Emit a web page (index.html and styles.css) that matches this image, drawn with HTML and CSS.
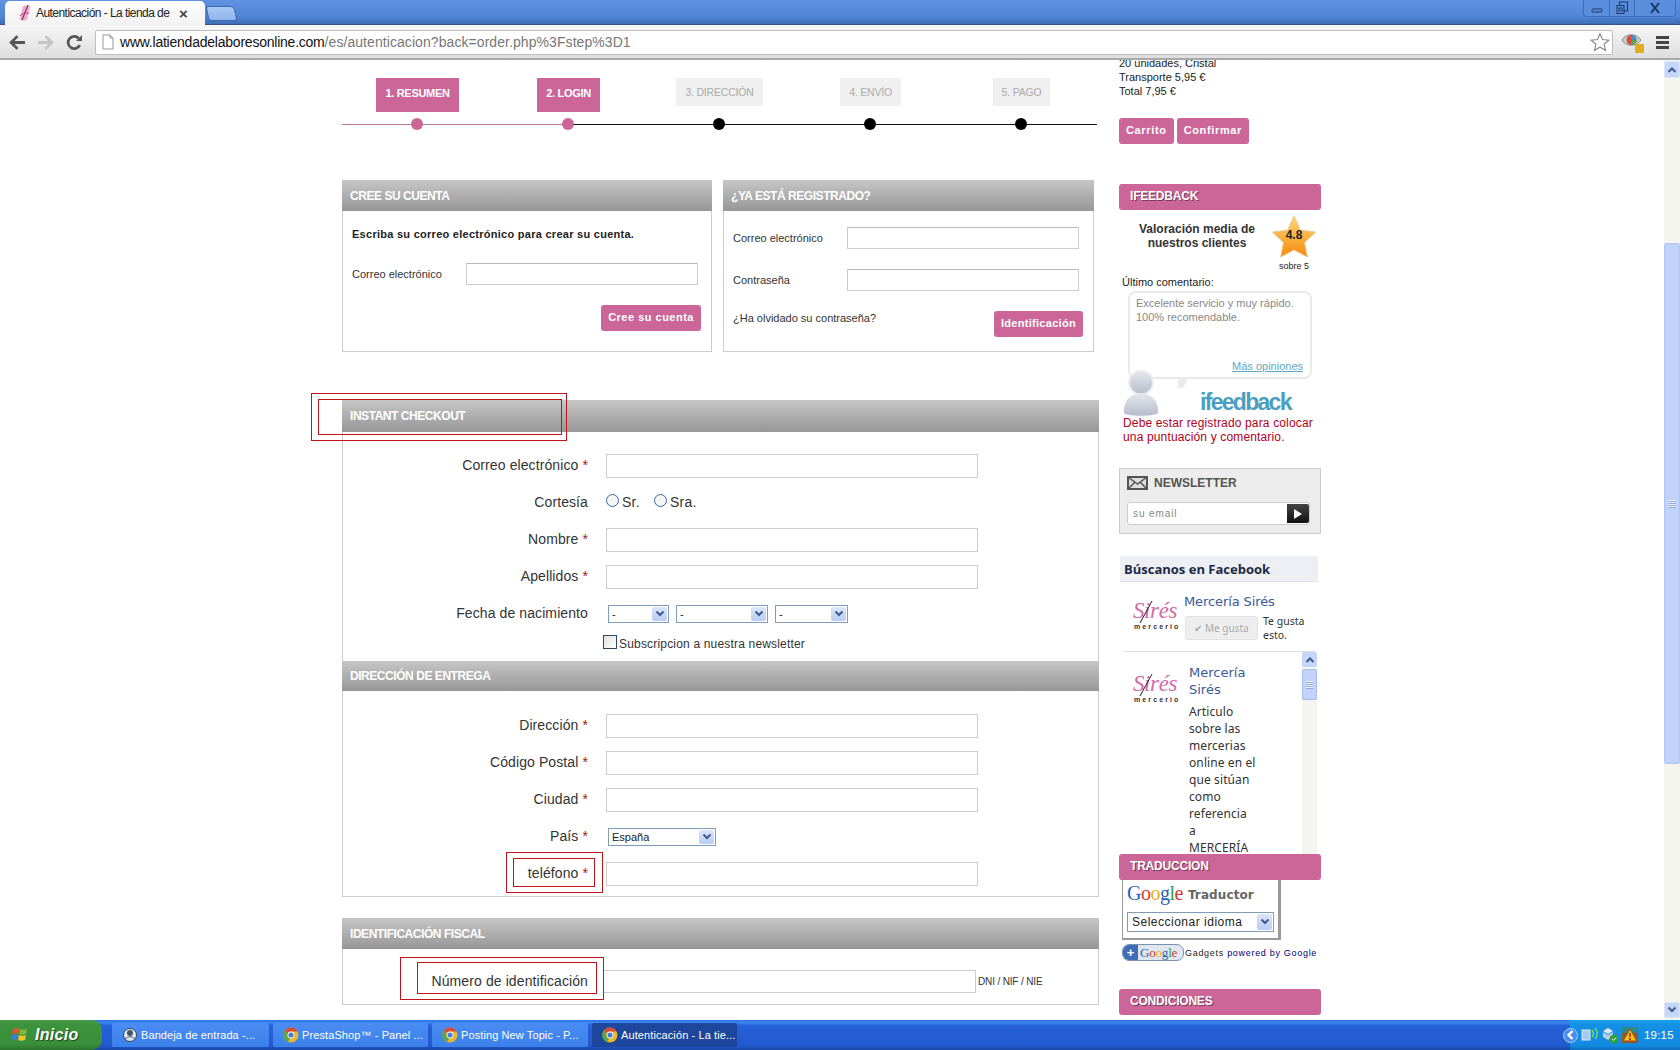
FILE: index.html
```html
<!DOCTYPE html>
<html lang="es">
<head>
<meta charset="utf-8">
<title>Autenticación - La tienda de labores online</title>
<link rel="stylesheet" href="styles.css">
</head>
<body>
<svg class="defs" width="0" height="0">
  <defs>
    <symbol id="chrome" viewBox="0 0 16 16">
      <circle cx="8" cy="8" r="7.5" fill="#e8b92c"/>
      <path d="M8 .5A7.5 7.5 0 0 1 14.6 4.5H8A3.6 3.6 0 0 0 4.6 7L2 3A7.5 7.5 0 0 1 8 .5Z" fill="#d94a3a"/>
      <path d="M2 3 4.6 7A3.6 3.6 0 0 0 7 11.5L5 15A7.5 7.5 0 0 1 2 3Z" fill="#5aa64a"/>
      <circle cx="8" cy="8" r="3.4" fill="#fff"/>
      <circle cx="8" cy="8" r="2.6" fill="#4a7fd0"/>
    </symbol>
    <symbol id="chev" viewBox="0 0 10 8">
      <path d="M1.5 1.5 5 5 8.500 1.500" fill="none" stroke="#3f5a8e" stroke-width="2"/>
    </symbol>
    <symbol id="sireslogo" viewBox="0 0 44 30">
      <path d="M7 22 19 0" stroke="#222" stroke-width="1"/>
    </symbol>
  </defs>
</svg>

<header class="chrome">
  <div class="tabstrip">
    <div class="tab">
      <svg class="favicon" viewBox="0 0 14 16"><path d="M5 1c3-1 7-1 7 1L9 14c-1 2-7 2-7 0Z" fill="#f5a5cf"/><path d="M10 0 4 15" stroke="#333" stroke-width="1"/><path d="M2 11c2-3 8-4 9-2" fill="none" stroke="#c2357f"/></svg>
      <span class="tab-title">Autenticación - La tienda de</span>
      <span class="tab-close">×</span>
    </div>
    <div class="newtab"></div>
    <div class="winbtns">
      <div class="winbtn"><svg width="12" height="12" viewBox="0 0 12 12"><rect x="1" y="7" width="10" height="3" rx="1" fill="none" stroke="#1a3565" stroke-width="1"/></svg></div>
      <div class="winbtn"><svg width="13" height="14" viewBox="0 0 13 14"><rect x="3.500" y="1" width="8" height="9" fill="none" stroke="#1a3565"/><rect x="1" y="4.500" width="7" height="8" fill="#5d8fdc" stroke="#1a3565"/><rect x="3" y="7" width="3" height="3" fill="none" stroke="#1a3565"/></svg></div>
      <div class="winbtn winclose"><svg width="12" height="12" viewBox="0 0 12 12"><path d="M2 1 10 11M10 1 2 11" stroke="#1a3565" stroke-width="2"/></svg></div>
    </div>
  </div>
  <div class="toolbar">
    <svg class="navicon" viewBox="0 0 16 16"><path d="M8 2 2 8l6 6M2 8h13" fill="none" stroke="#555" stroke-width="2.600"/></svg>
    <svg class="navicon" viewBox="0 0 16 16"><path d="M8 2l6 6-6 6M14 8H1" fill="none" stroke="#c4c4c4" stroke-width="2.600"/></svg>
    <svg class="navicon reload" viewBox="0 0 16 16"><path d="M13 10.500A5.800 5.800 0 1 1 12 4" fill="none" stroke="#555" stroke-width="2.600"/><path d="M9.500 6.500H15V1Z" fill="#555"/></svg>
    <div class="omnibox">
      <svg class="pageicon" viewBox="0 0 12 16"><path d="M1 1h7l3 3v11H1Z" fill="#fff" stroke="#999"/><path d="M8 1v3h3" fill="none" stroke="#999"/></svg>
      <span class="url"><span class="url-host">www.latiendadelaboresonline.com</span>/es/autenticacion?back=order.php%3Fstep%3D1</span>
      <svg class="staricon" viewBox="0 0 18 18"><path d="M9 1.500 11.300 6.700 17 7.300 12.700 11 14 16.500 9 13.700 4 16.500 5.300 11 1 7.300 6.700 6.700Z" fill="#fff" stroke="#888"/></svg>
    </div>
    <div class="extension">
      <svg width="24" height="24" viewBox="0 0 24 24"><path d="M1 10C5 3 15 3 20 10 15 17 5 17 1 10Z" fill="#c8d0c0" stroke="#889"/><circle cx="10.500" cy="10" r="5" fill="#d94a3a"/><path d="M10.500 5a5 5 0 0 1 0 10Z" fill="#3f8fd0"/><path d="M10.500 10h5a5 5 0 0 1-5 5Z" fill="#5aa64a"/><rect x="14" y="14" width="9" height="9" rx="1" fill="#e0ac20"/></svg>
    </div>
    <div class="hamburger"><i></i><i></i><i></i></div>
  </div>
</header>

<div class="viewport">
  <main class="page">
    <div class="maincol">
      <ol class="steps">
        <li class="step on"><span class="step-label">1. RESUMEN</span><span class="step-dot"></span></li>
        <li class="step on"><span class="step-label">2. LOGIN</span><span class="step-dot"></span></li>
        <li class="step"><span class="step-label">3. DIRECCIÓN</span><span class="step-dot"></span></li>
        <li class="step"><span class="step-label">4. ENVÍO</span><span class="step-dot"></span></li>
        <li class="step"><span class="step-label">5. PAGO</span><span class="step-dot"></span></li>
      </ol>

      <div class="logins">
        <section class="loginbox">
          <h3 class="graybar small">CREE SU CUENTA</h3>
          <p class="intro">Escriba su correo electrónico para crear su cuenta.</p>
          <div class="lrow first"><label class="llabel">Correo electrónico</label><input class="linput" type="text"></div>
          <div class="lfoot end"><a class="pinkbtn">Cree su cuenta</a></div>
        </section>
        <section class="loginbox second">
          <h3 class="graybar small">¿YA ESTÁ REGISTRADO?</h3>
          <div class="lrow top"><label class="llabel">Correo electrónico</label><input class="linput" type="text"></div>
          <div class="lrow"><label class="llabel">Contraseña</label><input class="linput" type="text"></div>
          <div class="lfoot between"><span class="forgot">¿Ha olvidado su contraseña?</span><a class="pinkbtn">Identificación</a></div>
        </section>
      </div>

      <section class="checkout">
        <div class="mark mark-a"></div>
        <div class="mark mark-b"></div>
        <h3 class="graybar">INSTANT CHECKOUT</h3>
        <div class="formbody">
          <div class="row"><label class="rlabel">Correo electrónico <b>*</b></label><input class="rinput" type="text"></div>
          <div class="row"><label class="rlabel">Cortesía</label>
            <span class="radios"><span class="radio"></span><span class="rtext">Sr.</span><span class="radio r2"></span><span class="rtext">Sra.</span></span></div>
          <div class="row"><label class="rlabel">Nombre <b>*</b></label><input class="rinput" type="text"></div>
          <div class="row"><label class="rlabel">Apellidos <b>*</b></label><input class="rinput" type="text"></div>
          <div class="row"><label class="rlabel">Fecha de nacimiento</label>
            <span class="selects">
              <span class="sel w61">-<span class="arrow"><svg width="10" height="8"><use href="#chev"/></svg></span></span>
              <span class="sel w92">-<span class="arrow"><svg width="10" height="8"><use href="#chev"/></svg></span></span>
              <span class="sel w73">-<span class="arrow"><svg width="10" height="8"><use href="#chev"/></svg></span></span>
            </span></div>
          <div class="row news"><span class="checkbox"></span><span class="newstext">Subscripcion a nuestra newsletter</span></div>
        </div>
        <h3 class="graybar thin">DIRECCIÓN DE ENTREGA</h3>
        <div class="formbody addr">
          <div class="row"><label class="rlabel">Dirección <b>*</b></label><input class="rinput" type="text"></div>
          <div class="row"><label class="rlabel">Código Postal <b>*</b></label><input class="rinput" type="text"></div>
          <div class="row"><label class="rlabel">Ciudad <b>*</b></label><input class="rinput" type="text"></div>
          <div class="row"><label class="rlabel">País <b>*</b></label>
            <span class="selects"><span class="sel w108">España<span class="arrow"><svg width="10" height="8"><use href="#chev"/></svg></span></span></span></div>
          <div class="row"><label class="rlabel">teléfono <b>*</b></label><input class="rinput" type="text"></div>
          <div class="mark mark-c"></div>
          <div class="mark mark-d"></div>
        </div>
      </section>

      <section class="checkout fiscal">
        <h3 class="graybar">IDENTIFICACIÓN FISCAL</h3>
        <div class="fiscalbody">
          <label class="rlabel">Número de identificación</label><input class="rinput tight" type="text"><span class="dni">DNI / NIF / NIE</span>
          <div class="mark mark-e"></div>
          <div class="mark mark-f"></div>
        </div>
      </section>
    </div>

    <aside class="side">
      <div class="cart">20 unidades, Cristal<br>Transporte 5,95 €<br>Total 7,95 €</div>
      <div class="cartbtns"><a class="pinkbtn">Carrito</a><a class="pinkbtn c2">Confirmar</a></div>

      <h3 class="sidehead">IFEEDBACK</h3>
      <div class="rating">
        <div class="rating-text">Valoración media de<br>nuestros clientes</div>
        <div class="rating-star">
          <svg class="star" viewBox="0 0 46 44"><defs><linearGradient id="sg" x1="0" y1="0" x2="0" y2="1"><stop offset="0" stop-color="#ffd979"/><stop offset="1" stop-color="#f58a0c"/></linearGradient></defs><path d="M23 1 29.500 15.500 45 17.500 33.800 28.300 36.700 43 23 35.800 9.300 43 12.200 28.300 1 17.500 16.500 15.500Z" fill="url(#sg)" stroke="#e8c98a"/></svg>
          <span class="star-val">4.8</span>
          <span class="star-sub">sobre 5</span>
        </div>
      </div>
      <div class="lastc">Último comentario:</div>
      <div class="bubble">
        <p class="bubble-text">Excelente servicio y muy rápido.<br>100% recomendable.</p>
        <a class="more">Más opiniones</a>
        <span class="tail"></span>
        <svg class="person" viewBox="0 0 36 46"><defs><linearGradient id="pg" x1="0" y1="0" x2="0" y2="1"><stop offset="0" stop-color="#e6e8ee"/><stop offset="1" stop-color="#b6bccb"/></linearGradient></defs><circle cx="18" cy="13" r="12" fill="url(#pg)" stroke="#eee" stroke-width="2"/><path d="M1 44C0 30 8 24 18 24S36 30 35 44C28 47 8 47 1 44Z" fill="url(#pg)"/></svg>
        <span class="iflogo">ifeedback</span>
      </div>
      <p class="warn">Debe estar registrado para colocar una puntuación y comentario.</p>

      <div class="newsletter">
        <div class="nl-head"><svg width="21" height="14" viewBox="0 0 21 14"><rect x="1" y="1" width="19" height="12" fill="#ddd" stroke="#555" stroke-width="2"/><path d="M1 1 10.500 8 20 1M1 13 8 6M20 13 13 6" fill="none" stroke="#555" stroke-width="1.500"/></svg><span>NEWSLETTER</span></div>
        <div class="nl-field"><span class="nl-ph">su email</span><span class="nl-go"><svg width="10" height="10" viewBox="0 0 10 10"><path d="M1 0 9 5 1 10Z" fill="#fff"/></svg></span></div>
      </div>

      <div class="fb">
        <div class="fb-head">Búscanos en Facebook</div>
        <div class="fb-top">
          <div class="sires"><span class="sires-name">Sirés</span><svg class="needle"><use href="#sireslogo"/></svg><span class="sires-sub">mercerio</span></div>
          <div class="fb-info">
            <a class="fb-name">Mercería Sirés</a>
            <div class="fb-like"><span class="likebtn">✔ Me gusta</span><span class="liketxt">Te gusta esto.</span></div>
          </div>
        </div>
        <div class="fb-feed">
          <div class="sires s2"><span class="sires-name">Sirés</span><svg class="needle"><use href="#sireslogo"/></svg><span class="sires-sub">mercerio</span></div>
          <div class="fb-post"><a class="fb-name">Mercería Sirés</a><p>Articulo sobre las mercerias online en el que sitúan como referencia<br>a<br>MERCERÍA</p></div>
          <div class="fb-scroll">
            <span class="fbs-up"><svg width="10" height="8" viewBox="0 0 10 8"><path d="M1.500 6 5 2.500 8.500 6" fill="none" stroke="#3f5a8e" stroke-width="2"/></svg></span>
            <span class="fbs-thumb"><span class="grip"></span></span>
          </div>
        </div>
      </div>

      <h3 class="sidehead trad">TRADUCCION</h3>
      <div class="gt">
        <div class="gt-logo"><span class="gb">G</span><span class="gr">o</span><span class="gy">o</span><span class="gb">g</span><span class="gg">l</span><span class="gr">e</span><span class="gt-word">Traductor</span></div>
        <div class="sel gt-sel">Seleccionar idioma<span class="arrow"><svg width="10" height="8"><use href="#chev"/></svg></span></div>
      </div>
      <div class="gadgets">
        <span class="plusg"><span class="plus">+</span><span class="plusw"><span class="gb">G</span><span class="gr">o</span><span class="gy">o</span><span class="gb">g</span><span class="gg">l</span><span class="gr">e</span></span></span>
        <span class="gtext">Gadgets <span class="pow">powered by Google</span></span>
      </div>

      <h3 class="sidehead cond">CONDICIONES</h3>
    </aside>
  </main>

  <div class="vscroll">
    <span class="vs-btn"><svg width="10" height="8" viewBox="0 0 10 8"><path d="M1.500 6 5 2.500 8.500 6" fill="none" stroke="#3f5a8e" stroke-width="2"/></svg></span>
    <span class="vs-thumb"><span class="grip"></span></span>
    <span class="vs-btn bottom"><svg width="10" height="8"><use href="#chev"/></svg></span>
  </div>
</div>

<footer class="taskbar">
  <div class="start">
    <svg width="20" height="20" viewBox="0 0 20 20"><path d="M3 4c2-1 4-1 6 0L8 9C6 8 4 8 2 9Z" fill="#e8552c"/><path d="M10 4c2 1 4 1 7 0l-1 5c-2 1-5 1-7 0Z" fill="#7fb93a"/><path d="M2 10c2-1 4-1 6 0l-1 5c-2-1-4-1-6 0Z" fill="#3f7fd8"/><path d="M9 10c2 1 5 1 7 0l-1 5c-2 1-5 1-7 0Z" fill="#f0c22c"/></svg>
    <span class="start-text">Inicio</span>
  </div>
  <div class="tasks">
    <div class="task t1"><svg class="tk-ic" viewBox="0 0 16 16"><circle cx="8" cy="8" r="6.500" fill="#dfe6ee" stroke="#345"/><circle cx="8" cy="6" r="3" fill="#456"/><path d="M3 12c3-3 7-3 10 0" stroke="#456" fill="none"/></svg><span>Bandeja de entrada -...</span></div>
    <div class="task t2"><svg class="tk-ic"><use href="#chrome"/></svg><span>PrestaShop™ - Panel ...</span></div>
    <div class="task t3"><svg class="tk-ic"><use href="#chrome"/></svg><span>Posting New Topic - P...</span></div>
    <div class="task t4 active"><svg class="tk-ic"><use href="#chrome"/></svg><span>Autenticación - La tie...</span></div>
  </div>
  <div class="tray">
    <span class="tray-toggle"><svg width="10" height="10" viewBox="0 0 10 10"><path d="M6.500 1 2.500 5 6.500 9" fill="none" stroke="#fff" stroke-width="2.400"/></svg></span>
    <svg width="18" height="16" viewBox="0 0 18 16"><rect x="1" y="3" width="8" height="10" fill="#a8c8f0" stroke="#dfe9f8"/><path d="M11 3c2 2 2 5 0 7M14 1c3 3 3 8 0 11" fill="none" stroke="#6fe05a" stroke-width="1.500"/></svg>
    <svg class="tray-ic" width="18" height="18" viewBox="0 0 18 18"><path d="M2 5 7 2 12 5 7 8Z" fill="#dfe9f8"/><path d="M2 6 7 9V14L2 11ZM12 6V11L7 14V9Z" fill="#b8cde8"/><circle cx="13" cy="13" r="4.500" fill="#2f9e3f"/><path d="M11 13l1.500 1.500L15 11.500" stroke="#fff" fill="none"/></svg>
    <svg class="tray-ic" width="18" height="18" viewBox="0 0 18 18"><rect x="1" y="1" width="16" height="16" fill="#8a5a2a"/><rect x="1" y="1" width="16" height="6" fill="#2a8a8a"/><path d="M9 3 16 15H2Z" fill="#f2c21c" stroke="#b2401c"/><path d="M9 7v4M9 12v2" stroke="#a0201c" stroke-width="1.500"/></svg>
    <span class="clock">19:15</span>
  </div>
</footer>
</body>
</html>
```

FILE: styles.css
```css
* { box-sizing: border-box; }
html, body { margin: 0; padding: 0; height: 100%; }
body {
  width: 1680px; height: 1050px; overflow: hidden;
  display: flex; flex-direction: column;
  font-family: "Liberation Sans", Arial, sans-serif;
  font-size: 11px; color: #333; background: #fff;
}
.defs { position: absolute; }
h3, p, ol { margin: 0; padding: 0; }

/* Browser chrome */
.chrome { flex: none; height: 60px; display: flex; flex-direction: column; }
.tabstrip {
  height: 25px; display: flex; align-items: flex-end; padding-left: 5px; position: relative;
  background: linear-gradient(#5f92e0, #5084d6 70%, #3f6db8);
  border-bottom: 1px solid #35558c;
}
.tab {
  width: 200px; height: 24px; background: linear-gradient(#fff, #f2f2f2); border-radius: 5px 5px 0 0;
  display: flex; align-items: center; padding-left: 13px; margin-bottom: -1px;
}
.favicon { width: 14px; height: 16px; flex: none; }
.tab-title { margin-left: 4px; font-size: 12px; color: #222; white-space: nowrap; width: 134px; letter-spacing: -.55px; }
.tab-close { margin-left: 9px; font-size: 15px; line-height: 1; color: #444; font-weight: bold; }
.newtab {
  width: 29px; height: 15px; margin: 0 0 3px 2px; border-radius: 3px 5px 3px 3px;
  background: linear-gradient(#a9c8f5, #8fb6ee); border: 1px solid #3e69ad; transform: skewX(12deg);
}
.winbtns {
  position: absolute; right: 4px; top: 0; height: 17px; display: flex;
  border: 1px solid #3f6db8; border-top: 0; border-radius: 0 0 4px 4px; background: #5a8edd;
}
.winbtn { width: 25px; display: flex; align-items: center; justify-content: center; border-left: 1px solid #3f6db8; }
.winbtn:first-child { border-left: 0; }
.winclose { width: 41px; }
.toolbar {
  height: 35px; flex: none; display: flex; align-items: center; padding: 1px 0 0 9px; gap: 0;
  background: linear-gradient(#f6f6f6, #dedede); border-bottom: 2px solid #a9a9a9;
}
.navicon { width: 17px; height: 17px; margin-right: 11px; flex: none; }
.navicon.reload { margin-left: 1px; margin-right: 12px; }
.omnibox {
  width: 1518px; height: 25px; background: #fff; border: 1px solid #bdbdbd; border-radius: 2px;
  display: flex; align-items: center; padding-left: 6px; position: relative;
}
.pageicon { width: 12px; height: 16px; flex: none; }
.url { margin-left: 6px; font-size: 14px; color: #777; letter-spacing: .07px; white-space: nowrap; flex: 1; }
.url-host { color: #111; letter-spacing: -.23px; }
.staricon { width: 20px; height: 20px; margin-right: 2px; flex: none; }
.extension { width: 24px; height: 24px; margin-left: 8px; flex: none; }
.hamburger { margin-left: 11px; width: 13px; display: flex; flex-direction: column; gap: 2px; }
.hamburger i { display: block; height: 3px; background: #444; }

/* Viewport */
.viewport { flex: none; height: 960px; display: flex; overflow: hidden; }
.page { width: 1664px; height: 960px; overflow: hidden; display: flex; padding-left: 342px; gap: 20px; }
.maincol { width: 757px; flex: none; }
.side { width: 202px; flex: none; margin-top: -4px; }

/* Steps */
.steps { list-style: none; display: grid; grid-template-columns: repeat(5, 151px); height: 120px; position: relative; padding-top: 18px; }
.steps::before { content: ""; position: absolute; left: 151px; right: 2px; top: 63.5px; height: 1px; background: #111; }
.steps::after { content: ""; position: absolute; left: 0; width: 226px; top: 63.5px; height: 1px; background: #c07a9b; }
.step { display: flex; flex-direction: column; align-items: center; position: relative; }
.step-label {
  height: 28px; padding: 0 9px; line-height: 29px; font-size: 10.5px; font-weight: normal;
  background: #f0f0f0; color: #aaa; letter-spacing: -.2px; white-space: nowrap;
}
.step.on .step-label { background: #cc6699; color: #fff; font-weight: bold; font-size: 11px; height: 34px; line-height: 31px; letter-spacing: -.3px; }
.step-dot {
  position: absolute; top: 40px; width: 12px; height: 12px; border-radius: 50%; background: #000; z-index: 1; transform: translateX(-1px);
}
.step.on .step-dot { background: #cc6699; }

/* Gray bars */
.graybar {
  height: 32px; line-height: 32px; padding-left: 8px; color: #fff; font-size: 12px; font-weight: bold;
  letter-spacing: -.45px; background: linear-gradient(#c6c6c6, #979797);
}
.graybar.thin { height: 30px; line-height: 30px; }

/* Login boxes */
.logins { display: flex; gap: 11px; height: 172px; width: 752px; }
.loginbox { width: 370px; flex: none; border: 1px solid #ccc; border-top: 0; }
.loginbox.second { width: 371px; }
.loginbox .graybar { margin: 0 -1px; height: 31px; }
.intro { font-weight: bold; color: #222; margin: 16px 0 0 9px; line-height: 14px; letter-spacing: .27px; }
.lrow { display: flex; align-items: center; margin: 0 12px 0 9px; }
.lrow.first { margin-top: 22px; }
.lrow.top { margin-top: 16px; }
.lrow + .lrow { margin-top: 20px; }
.llabel { width: 114px; flex: none; }
.linput { width: 232px; height: 22px; border: 1px solid #ccc; border-top-color: #bbb; background: #fff; outline: 0; padding: 0; }
.lfoot { display: flex; margin: 20px 10px 0 9px; }
.lfoot.end { justify-content: flex-end; margin-top: 20px; }
.lfoot.end .pinkbtn { padding: 0 7px; letter-spacing: .5px; }
.lfoot.between { justify-content: space-between; margin-top: 20px; }
.forgot { line-height: 14px; }
.pinkbtn {
  display: inline-block; height: 26px; line-height: 25px; padding: 0 7px; background: #cc6699; color: #fff;
  font-weight: bold; border-radius: 3px; font-size: 11px; letter-spacing: .3px;
}

/* Checkout */
.checkout { margin-top: 48px; position: relative; border: 1px solid #ccc; border-top: 0; height: 497px; }
.checkout .graybar { margin: 0 -1px; }
.formbody { padding: 22px 0 0; height: 229px; }
.formbody.addr { height: 206px; padding-top: 23px; position: relative; }
.row { display: flex; align-items: flex-start; height: 37px; }
.rlabel {
  width: 245px; flex: none; text-align: right; font-size: 14px; line-height: 22px; color: #333; letter-spacing: .1px; white-space: nowrap;
}
.rlabel b { color: #a01820; font-weight: normal; }
.rinput { margin-left: 18px; width: 372px; height: 24px; border: 1px solid #ccc; background: #fff; padding: 0; outline: 0; }
.radios { margin-left: 18px; display: flex; align-items: center; height: 22px; font-size: 14px; letter-spacing: .25px; }
.radio { width: 13px; height: 13px; border-radius: 50%; border: 1px solid #3a6a9a; background: #f4f6f8; margin-right: 3px; margin-top: -3px; }
.radio.r2 { margin-left: 14px; }
.selects { margin-left: 20px; display: flex; gap: 7px; }
.sel {
  height: 18px; border: 1px solid #7f9db9; background: #fff; font-size: 11px; line-height: 17px; padding-left: 3px;
  display: flex; justify-content: space-between; color: #222; margin-top: 3px;
}
.arrow { width: 15px; height: 14px; margin: 1px; background: linear-gradient(#dce6fb, #b8ccf5); border-radius: 2px; display: flex; align-items: center; justify-content: center; flex: none; }
.w61 { width: 61px; } .w92 { width: 92px; } .w73 { width: 73px; } .w108 { width: 108px; }
.row.news { padding-left: 260px; }
.checkbox { width: 14px; height: 14px; border: 1px solid #2a4a6a; background: linear-gradient(135deg, #dfe2dc, #fff); margin-top: -4px; }
.newstext { font-size: 12px; margin-left: 2px; line-height: 14px; letter-spacing: .18px; margin-top: -2px; }

.fiscal { margin-top: 21px; height: 87px; }
.fiscal .graybar { height: 31px; }
.fiscalbody { display: flex; align-items: flex-start; padding-top: 21px; position: relative; }
.rinput.tight { margin-left: 15px; width: 373px; height: 23px; }
.dni { margin-left: 2px; font-size: 10px; line-height: 24px; letter-spacing: -.15px; }

/* Red annotation frames */
.mark { position: absolute; border: 1px solid #c0141c; pointer-events: none; z-index: 3; }
.mark-a { left: -32px; top: -7px; width: 256px; height: 48px; }
.mark-b { left: -25px; top: -1px; width: 244px; height: 36px; }
.mark-c { left: 163px; top: 161px; width: 97px; height: 41px; }
.mark-d { left: 170px; top: 167px; width: 82px; height: 29px; }
.mark-e { left: 57px; top: 8px; width: 204px; height: 43px; }
.mark-f { left: 74px; top: 13px; width: 180px; height: 32px; }

/* Sidebar */
.cart { line-height: 14px; color: #222; font-size: 11px; }
.cartbtns { display: flex; gap: 3px; margin-top: 20px; }
.cartbtns .pinkbtn { padding: 0 7px; letter-spacing: .65px; }
.sidehead {
  height: 26px; line-height: 24px; margin-top: 40px; padding-left: 11px; background: #cc6699; color: #fff;
  font-size: 12px; font-weight: bold; border-radius: 3px; text-shadow: 1px 1px 0 #7a3a5a; letter-spacing: -.2px;
}
.sidehead.trad { margin-top: 0; }
.sidehead.cond { margin-top: 28px; }
.rating { display: flex; height: 66px; padding-top: 5px; position: relative; }
.rating-text { width: 150px; text-align: center; font-weight: bold; font-size: 12px; line-height: 14px; color: #333; padding: 7px 0 0 6px; }
.rating-star { position: relative; width: 46px; margin-left: 2px; text-align: center; }
.star { width: 46px; height: 43px; display: block; }
.star-val { position: absolute; left: 0; right: 0; top: 13px; font-weight: bold; font-size: 12px; color: #222; }
.star-sub { display: block; font-size: 9px; line-height: 14px; color: #222; margin-top: 1px; }
.lastc { padding-left: 3px; line-height: 14px; color: #222; margin-top: -1px; }
.bubble {
  position: relative; margin: 2px 9px 37px 9px; height: 88px; border: 2px solid #eaeaea; border-radius: 8px; background: #fff;
}
.bubble-text { color: #888; padding: 2px 0 0 6px; line-height: 14px; margin-top: 1px; }
.more { position: absolute; right: 7px; top: 67px; color: #5ba8c5; text-decoration: underline; }
.tail { position: absolute; left: 48px; bottom: -11px; width: 0; height: 0; border-left: 5px solid #eaeaea; border-right: 5px solid transparent; border-top: 10px solid #eaeaea; }
.person { position: absolute; left: -7px; top: 76px; width: 36px; height: 47px; }
.iflogo { position: absolute; left: 70px; top: 95px; font-size: 23px; font-weight: bold; color: #4a9fc0; letter-spacing: -1.700px; line-height: 28px; white-space: nowrap; }
.warn { color: #b10021; font-size: 12px; line-height: 14px; padding-left: 4px; width: 202px; letter-spacing: .15px; }

.newsletter { margin-top: 24px; height: 66px; background: #ececec; border: 1px solid #ccc; padding: 6px 10px 0 7px; }
.nl-head { display: flex; align-items: center; gap: 6px; height: 16px; font-weight: bold; font-size: 12px; color: #555; }
.nl-field { margin-top: 11px; height: 23px; background: #fff; border: 1px solid #ccc; border-radius: 3px; display: flex; align-items: center; justify-content: space-between; }
.nl-ph { color: #888; font-size: 10px; letter-spacing: .9px; padding-left: 5px; }
.nl-go { width: 22px; height: 19px; background: linear-gradient(#444, #111); border-radius: 0 2px 2px 0; display: flex; align-items: center; justify-content: center; }

.fb { margin: 22px 0 0 1px; width: 198px; height: 298px; overflow: hidden; font-family: "Noto Sans", sans-serif; }
.fb-head { height: 26px; line-height: 26px; padding-left: 4px; background: #edeff4; border-bottom: 1px solid #dfe3ec; font-family: "Open Sans", sans-serif; font-weight: 700; font-size: 13px; color: #1c2a47; }
.fb-top { display: flex; height: 70px; margin: 0 3px 0 5px; border-bottom: 1px solid #d8dfea; }
.sires { position: relative; width: 44px; height: 30px; margin: 19px 0 0 8px; flex: none; font-family: "Liberation Serif", serif; }
.needle { position: absolute; left: 0; top: 0; width: 44px; height: 30px; }
.sires-name { position: absolute; left: 0; top: -2px; font-style: italic; font-size: 23px; line-height: 24px; color: #d56aa8; letter-spacing: -.4px; white-space: nowrap; }
.sires-sub { position: absolute; left: 1px; top: 21px; font-family: "Liberation Sans", sans-serif; font-size: 7px; font-weight: bold; letter-spacing: 2.100px; color: #333; line-height: 9px; }
.fb-info { margin-left: 7px; padding-top: 11px; flex: 1; }
.fb-name { display: block; font-family: "DejaVu Sans", sans-serif; font-size: 13px; line-height: 17px; color: #3b5998; white-space: normal; }
.fb-info .fb-name { letter-spacing: -.1px; white-space: nowrap; }
.fb-like { display: flex; margin-top: 6px; gap: 5px; padding-left: 1px; }
.likebtn { width: 73px; height: 24px; background: #eee; border: 1px solid #e2e2e2; border-radius: 3px; color: #aaa; font-size: 10px; line-height: 22px; text-align: center; flex: none; white-space: nowrap; }
.liketxt { font-size: 10.5px; line-height: 14px; color: #333; width: 46px; margin-top: -2px; }
.fb-feed { display: flex; height: 210px; position: relative; }
.sires.s2 { margin: 22px 0 0 13px; }
.fb-post { margin-left: 12px; width: 76px; padding-top: 12px; flex: none; }
.fb-post p { font-size: 12px; line-height: 17px; color: #333; margin: 5px 0 0; letter-spacing: .1px; }
.fb-scroll { position: absolute; right: 1px; top: 0; width: 15px; height: 210px; background: #f4f4f0; display: flex; flex-direction: column; }
.fbs-up { height: 15px; background: #c6d6f8; display: flex; align-items: center; justify-content: center; border-radius: 2px; }
.fbs-thumb { height: 31px; margin-top: 2px; background: #c1d3fb; border: 1px solid #a8bdf0; border-radius: 2px; display: flex; align-items: center; justify-content: center; }

.gt { margin-left: 3px; width: 159px; height: 60px; background: #fff; border: 1px solid #999; border-width: 0 3px 2px 1px; padding: 1px 0 0 4px; }
.gt-logo { font-family: "Liberation Serif", serif; font-size: 20px; line-height: 24px; letter-spacing: -.5px; white-space: nowrap; }
.gb { color: #2a5fb8; } .gr { color: #d8382c; } .gy { color: #e6ad1e; } .gg { color: #2f9e3f; }
.gt-word { font-family: "DejaVu Sans", sans-serif; font-weight: bold; font-size: 12px; color: #666; margin-left: 5px; letter-spacing: .1px; position: relative; top: -1px; }
.gt-sel { width: 147px; height: 20px; margin-top: 4px; font-size: 12px; line-height: 18px; letter-spacing: .5px; padding-left: 4px; }
.gt-sel .arrow { height: 16px; }
.gadgets { display: flex; align-items: center; margin: 4px 0 0 3px; height: 17px; }
.plusg { width: 62px; height: 17px; border: 1px solid #7d90ac; border-radius: 7px; background: #dfe6ee; display: flex; align-items: center; overflow: hidden; flex: none; font-family: "Liberation Serif", serif; font-size: 13px; }
.plus { width: 15px; height: 100%; background: #3f6db8; color: #fff; text-align: center; font: bold 13px/15px "Liberation Sans", sans-serif; flex: none; }
.plusw { margin-left: 2px; letter-spacing: -.2px; }
.gtext { font-size: 9px; margin-left: 1px; letter-spacing: .7px; white-space: nowrap; color: #222; }
.pow { color: #00007f; }

/* Page scrollbar */
.vscroll { width: 16px; flex: none; background: #f5f5f0; display: flex; flex-direction: column; padding-bottom: 2px; }
.vs-btn { height: 17px; flex: none; background: #c6d6f8; border: 1px solid #dbe5fa; border-radius: 2px; display: flex; align-items: center; justify-content: center; margin-top: 1px; }
.vs-btn.bottom { margin-top: auto; height: 16px; }
.vs-thumb { height: 521px; margin-top: 165px; flex: none; background: #c1d3fb; border: 1px solid #b0c4f4; border-radius: 2px; display: flex; align-items: center; justify-content: center; }
.grip { width: 7px; height: 8px; background: repeating-linear-gradient(#eef3ff 0 1px, #8fa8e0 1px 2px); }

/* Taskbar */
.taskbar {
  flex: none; height: 30px; display: flex; align-items: stretch; position: relative;
  background: linear-gradient(#2a6fe0 0, #3a86f0 8%, #2560d8 20%, #2259cf 85%, #1a47a8 100%);
}
.start {
  width: 102px; display: flex; align-items: center; padding-left: 10px; gap: 5px; flex: none;
  background: linear-gradient(#4c9b4c, #3d923d 15%, #3a8f3a 80%, #2d752d); border-radius: 0 10px 10px 0;
}
.start-text { font-size: 16px; font-weight: bold; font-style: italic; color: #fff; text-shadow: 1px 1px 1px #1d4a1d; letter-spacing: .3px; }
.tasks { display: flex; gap: 4px; padding: 3px 0 3px 10px; flex: none; }
.task {
  height: 24px; display: flex; align-items: center; padding-left: 10px; color: #fff; font-size: 11px; white-space: nowrap;
  background: linear-gradient(#4a8cf2, #3c80ea); border-radius: 2px; letter-spacing: .1px;
}
.tk-ic { width: 16px; height: 16px; margin-right: 3px; flex: none; }
.t1 { width: 157px; } .t2 { width: 155px; } .t3 { width: 156px; } .t4 { width: 145px; }
.task.active { background: #1c479c; }
.tray {
  margin-left: auto; width: 110px; display: flex; align-items: center;
  background: linear-gradient(#17a0ee, #1490e4 15%, #118bdf 85%, #0f6cc0); color: #fff;
}
.tray-toggle { width: 15px; height: 15px; border-radius: 50%; background: #4a8cf2; border: 1px solid #a8d0ff; display: flex; align-items: center; justify-content: center; margin: 0 3px 0 -7px; }
.tray-ic { margin-left: 2px; }
.clock { margin-left: 5px; font-size: 11.5px; letter-spacing: .2px; }
```
